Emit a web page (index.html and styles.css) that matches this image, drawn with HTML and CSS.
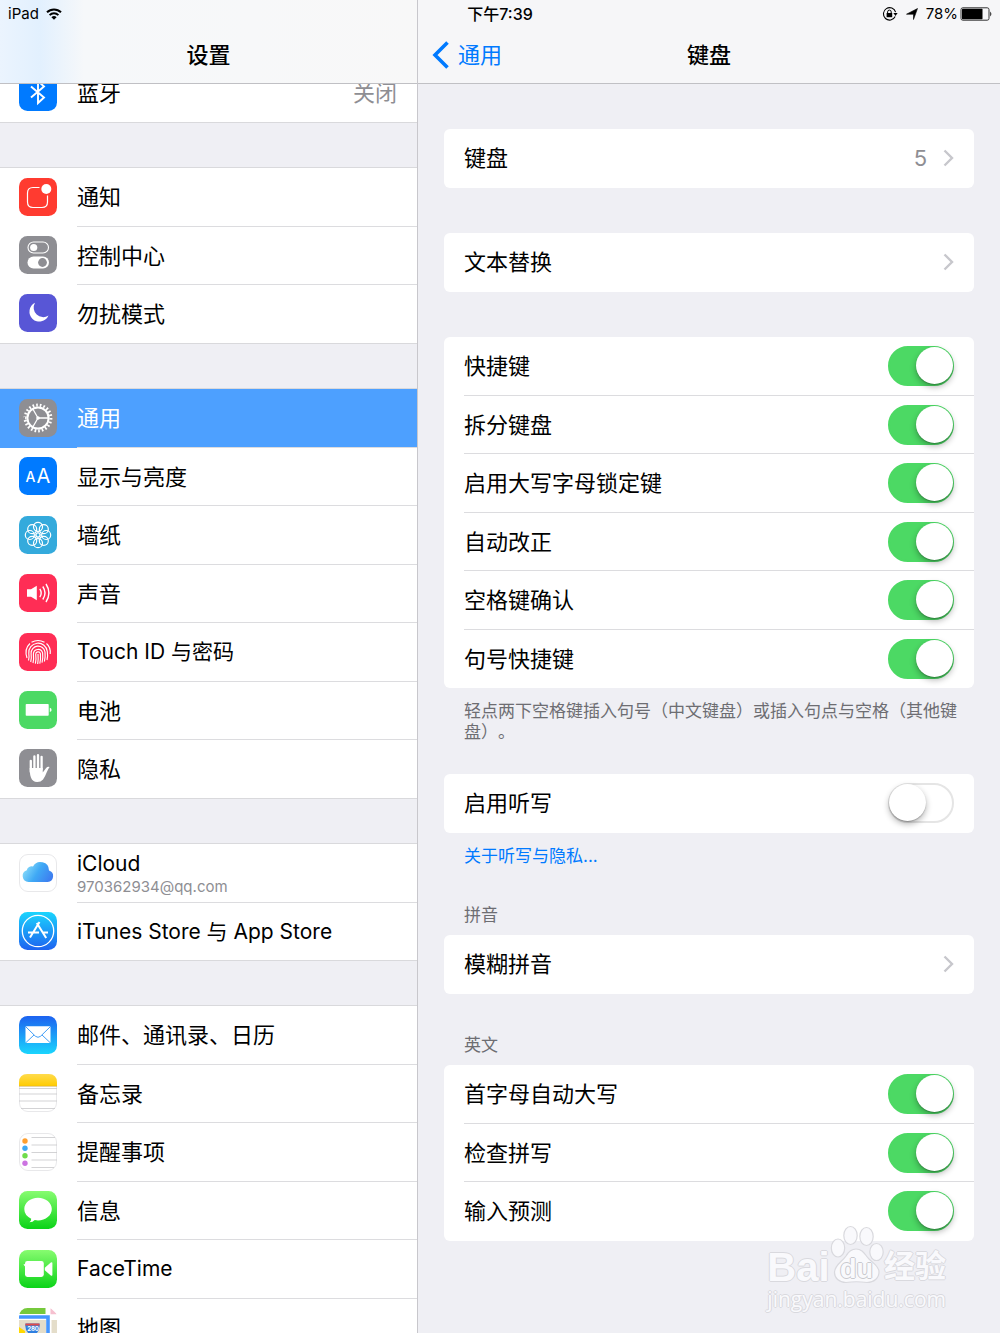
FILE: index.html
```html
<!DOCTYPE html>
<html lang="zh-CN">
<head>
    <meta charset="UTF-8">
    <meta name="viewport" content="width=device-width, initial-scale=1.0">
    <title>设置 - 键盘</title>
    <link rel="stylesheet" href="styles.css">
</head>
<body>
    <div class="status-bar">
        <div class="status-left">
            <span>iPad</span>
            <svg width="16" height="12" viewBox="0 0 16 12" fill="none" stroke="#000" stroke-width="2">
                <path d="M1 4.3a10 10 0 0 1 14 0"></path>
                <path d="M3.6 7.1a6.3 6.3 0 0 1 8.8 0"></path>
                <path d="M8 11.8L5.4 9.2a3.7 3.7 0 0 1 5.2 0z" fill="#000" stroke="none"></path>
            </svg>
        </div>
        <div class="status-time">下午7:39</div>
        <div class="status-right">
            <svg width="16" height="16" viewBox="0 0 16 16" fill="none" stroke="#000">
                <path d="M13.2 10.6A6.2 6.2 0 1 1 13.6 6.2" stroke-width="1.1"></path>
                <path d="M11.4 7h4.2l-2.1 3z" fill="#000" stroke="none"></path>
                <path d="M5.6 7.3v-1.4a1.8 1.8 0 0 1 3.6 0v1.4"></path>
                <rect x="4.6" y="7" width="5.6" height="4.2" fill="#000" stroke="none"></rect>
            </svg>
            <svg width="14" height="14" viewBox="0 0 14 14">
                <path d="M12.500 1.500L8.500 12.500V7.200H1.500z" fill="#000" stroke="#000" stroke-width="0.600"></path>
            </svg>
            <span>78%</span>
            <svg class="battery" width="32" height="14" viewBox="0 0 32 14">
                <rect x="1" y="0.8" width="28" height="12.4" rx="1.8" fill="none" stroke="#333"></rect>
                <rect x="2" y="1.8" width="20.5" height="10.4" rx="0.6"></rect>
                <path d="M30.3 4.6q2 2.4 0 4.8z"></path>
            </svg>
        </div>
    </div>

    <div class="split-view">
        <aside class="sidebar">
            <header class="navbar navbar-sidebar">
                <h1 class="navbar-title">设置</h1>
            </header>
            <nav class="sidebar-list">
                <ul class="menu menu-first">
                    <li><a class="menu-row" href="#bluetooth">
                        <svg class="icon" viewBox="0 0 38 38">
                            <rect width="38" height="38" rx="8.5" fill="#007aff"></rect>
                            <path d="M12 13.500l13 11-6 5.500V8l6 5.500-13 11" fill="none" stroke="#fff" stroke-width="1.900"></path>
                        </svg>
                        <span class="menu-body">蓝牙<span class="menu-value">关闭</span></span>
                    </a></li>
                </ul>
                <ul class="menu">
                    <li><a class="menu-row" href="#notifications">
                        <svg class="icon" viewBox="0 0 38 38">
                            <rect width="38" height="38" rx="8.5" fill="#ff3b30"></rect>
                            <path d="M20.500 9.500H14q-5.500 0-5.500 5.500v9q0 5.500 5.500 5.500h9q5.500 0 5.500-5.500v-6.500" fill="none" stroke="#fff" stroke-width="1.2"></path>
                            <circle cx="27.3" cy="11" r="5" fill="#fff"></circle>
                        </svg>
                        <span class="menu-body">通知</span>
                    </a></li>
                    <li><a class="menu-row" href="#control-center">
                        <svg class="icon" viewBox="0 0 38 38">
                            <rect width="38" height="38" rx="8.5" fill="#8e8e93"></rect>
                            <rect x="9" y="6" width="20.500" height="11" rx="5.500" fill="none" stroke="#fff" stroke-width="1.1"></rect>
                            <circle cx="14.7" cy="11.5" r="3.6" fill="#fff"></circle>
                            <rect x="8.5" y="20.5" width="21.5" height="12" rx="6" fill="#fff"></rect>
                            <circle cx="23.5" cy="26.5" r="4.4" fill="#8e8e93"></circle>
                        </svg>
                        <span class="menu-body">控制中心</span>
                    </a></li>
                    <li><a class="menu-row" href="#do-not-disturb">
                        <svg class="icon" viewBox="0 0 38 38">
                            <rect width="38" height="38" rx="8.5" fill="#5856d6"></rect>
                            <path d="M16 8.800A9.900 9.900 0 1 0 29.500 21.500A9.500 9.500 0 0 1 16 8.800z" fill="#fff"></path>
                        </svg>
                        <span class="menu-body">勿扰模式</span>
                    </a></li>
                </ul>
                <ul class="menu">
                    <li><a class="menu-row selected" href="#general" aria-current="page">
                        <svg class="icon" viewBox="0 0 38 38">
                            <rect width="38" height="38" rx="8.5" fill="#8e8e93"></rect>
                            <g fill="none" stroke="#fff">
                                <circle cx="19" cy="19" r="10.600" stroke-width="2"></circle>
                                <circle cx="19" cy="19" r="12.900" stroke-width="3" pathLength="44" stroke-dasharray="0.900 1.100"></circle>
                                <path d="M19 19h10.500M19 19l-5.300-9.200M19 19l-5.300 9.200" stroke-width="1.3"></path>
                            </g>
                            <circle cx="19" cy="19" r="1.800" fill="#fff"></circle>
                        </svg>
                        <span class="menu-body">通用</span>
                    </a></li>
                    <li><a class="menu-row" href="#display">
                        <svg class="icon" viewBox="0 0 38 38">
                            <rect width="38" height="38" rx="8.5" fill="#007aff"></rect>
                            <text class="icon-letter" x="6.500" y="25" font-size="14" font-weight="500">A</text>
                            <text class="icon-letter" x="17.500" y="26" font-size="20">A</text>
                        </svg>
                        <span class="menu-body">显示与亮度</span>
                    </a></li>
                    <li><a class="menu-row" href="#wallpaper">
                        <svg class="icon" viewBox="0 0 38 38">
                            <rect width="38" height="38" rx="8.5" fill="#34aadc"></rect>
                            <g fill="none" stroke="#fff" stroke-width="1.200">
                                <circle cx="19" cy="10.800" r="4.500"></circle>
                                <circle cx="24.800" cy="13.200" r="4.500"></circle>
                                <circle cx="27.200" cy="19" r="4.500"></circle>
                                <circle cx="24.800" cy="24.800" r="4.500"></circle>
                                <circle cx="19" cy="27.200" r="4.500"></circle>
                                <circle cx="13.200" cy="24.800" r="4.500"></circle>
                                <circle cx="10.800" cy="19" r="4.500"></circle>
                                <circle cx="13.200" cy="13.200" r="4.500"></circle>
                                <circle cx="19" cy="19" r="2"></circle>
                                <path d="M19 15v2M19 21v2M15 19h2M21 19h2M16 16l1.600 1.600M20.400 20.400l1.600 1.600M22 16l-1.600 1.600M17.600 20.400l-1.600 1.600"></path>
                            </g>
                        </svg>
                        <span class="menu-body">墙纸</span>
                    </a></li>
                    <li><a class="menu-row" href="#sounds">
                        <svg class="icon" viewBox="0 0 38 38">
                            <rect width="38" height="38" rx="8.5" fill="#ff2d55"></rect>
                            <path d="M8 15.300h4l5.800-3.500v14.400l-5.800-3.500H8z" fill="#fff"></path>
                            <g fill="none" stroke="#fff" stroke-width="1.4">
                                <path d="M20.800 14.800q2.800 4.200 0 8.400"></path>
                                <path d="M23.800 12.500q4.400 6.500 0 13"></path>
                                <path d="M27 10q5.800 9 0 18"></path>
                            </g>
                        </svg>
                        <span class="menu-body">声音</span>
                    </a></li>
                    <li><a class="menu-row latin" href="#touch-id">
                        <svg class="icon" viewBox="0 0 38 38">
                            <rect width="38" height="38" rx="8.5" fill="#ff2d55"></rect>
                            <g fill="none" stroke="#fff" stroke-width="1.150">
                                <path d="M12.500 9.300q6.500-3.600 13 0"></path>
                                <path d="M8 25q-3-9 3-14.500M27.500 10.500q4.500 4 3.700 10.500"></path>
                                <path d="M9.500 27.500q1-3 .3-7a9.300 9.300 0 0 1 18.500-2q.7 4.500-.3 8.500"></path>
                                <path d="M11.700 29q1-4 .4-8.500a7 7 0 0 1 13.900-1.500q.5 5-.6 9.500"></path>
                                <path d="M14 30q1-4 .4-9a4.700 4.700 0 0 1 9.200-1.200q.6 5-.6 9.800"></path>
                                <path d="M16.400 30.600q1-4.500.3-9.400a2.400 2.400 0 0 1 4.700-.6q.5 5-.6 10"></path>
                                <path d="M19 21q.5 5-.3 10"></path>
                            </g>
                        </svg>
                        <span class="menu-body">Touch ID 与密码</span>
                    </a></li>
                    <li><a class="menu-row" href="#battery">
                        <svg class="icon" viewBox="0 0 38 38">
                            <rect width="38" height="38" rx="8.5" fill="#4cd964"></rect>
                            <rect x="6.700" y="13" width="23" height="11.700" rx="0.800" fill="#fff"></rect>
                            <path d="M30.800 16.800q1.800.6 1.800 2.100t-1.800 2.100z" fill="#fff"></path>
                        </svg>
                        <span class="menu-body">电池</span>
                    </a></li>
                    <li><a class="menu-row" href="#privacy">
                        <svg class="icon" viewBox="0 0 38 38">
                            <rect width="38" height="38" rx="8.5" fill="#8e8e93"></rect>
                            <g fill="none" stroke="#fff" stroke-width="2.300" stroke-linecap="round">
                                <path d="M11.800 23V11.800M15.400 20V7.500M19 20V6.200M22.600 20V7.800"></path>
                            </g>
                            <path d="M10.650 19h13.100v4.500l3.200-4.300q1.400-1.800 3.700-1.200-1.500 1.800-2.800 5-1.800 4.800-3.800 7.500-2.300 2.600-6 2.500-4.500-.2-6.100-4.500-1-2.800-1.100-6z" fill="#fff"></path>
                        </svg>
                        <span class="menu-body">隐私</span>
                    </a></li>
                </ul>
                <ul class="menu">
                    <li><a class="menu-row latin" href="#icloud">
                        <svg class="icon" viewBox="0 0 38 38">
                            <linearGradient id="cloud" x1="0" y1="0.3" x2="1" y2="0.7">
                                <stop offset="0" stop-color="#8fe0fa"></stop>
                                <stop offset="0.5" stop-color="#3fa9f5"></stop>
                                <stop offset="1" stop-color="#3d7cf0"></stop>
                            </linearGradient>
                            <rect x="0.5" y="0.5" width="37" height="37" rx="8.5" fill="#fff" stroke="#e8e8ea"></rect>
                            <path d="M9.500 28a6 6 0 0 1-1.700-11.700 5 5 0 0 1 6.200-3.800 8.500 8.500 0 0 1 16 4A5.900 5.900 0 0 1 28.700 28z" fill="url(#cloud)"></path>
                        </svg>
                        <span class="menu-body menu-account">
                            <span class="account-name">iCloud</span>
                            <span class="account-mail">970362934@qq.com</span>
                        </span>
                    </a></li>
                    <li><a class="menu-row latin" href="#store">
                        <svg class="icon" viewBox="0 0 38 38">
                            <linearGradient id="store" x1="0" y1="0" x2="0" y2="1">
                                <stop offset="0" stop-color="#1ad5fd"></stop>
                                <stop offset="1" stop-color="#1d62f0"></stop>
                            </linearGradient>
                            <rect width="38" height="38" rx="8.5" fill="url(#store)"></rect>
                            <g fill="none" stroke="#fff">
                                <circle cx="19" cy="19" r="15.700" stroke-width="1.300"></circle>
                                <path d="M20.500 10L11 25.500M17.800 11l9.400 15M9 20.500h11M23.800 20.500H29" stroke-width="2"></path>
                            </g>
                        </svg>
                        <span class="menu-body">iTunes Store 与 App Store</span>
                    </a></li>
                </ul>
                <ul class="menu">
                    <li><a class="menu-row" href="#mail">
                        <svg class="icon" viewBox="0 0 38 38">
                            <linearGradient id="mail" x1="0" y1="0" x2="0" y2="1">
                                <stop offset="0" stop-color="#1d62f0"></stop>
                                <stop offset="1" stop-color="#1ad5fd"></stop>
                            </linearGradient>
                            <rect width="38" height="38" rx="8.5" fill="url(#mail)"></rect>
                            <rect x="6.500" y="10.300" width="25" height="16.700" rx="1.200" fill="#fff"></rect>
                            <path d="M7 11l9.500 9.300q2.500 2 5 0L31 11M7 26.500l8-7.500M31 26.500L23 19" fill="none" stroke="#2e93f5" stroke-width="0.900"></path>
                        </svg>
                        <span class="menu-body">邮件、通讯录、日历</span>
                    </a></li>
                    <li><a class="menu-row" href="#notes">
                        <svg class="icon" viewBox="0 0 38 38">
                            <linearGradient id="notes" x1="0" y1="0" x2="0" y2="1">
                                <stop offset="0" stop-color="#ffdb4c"></stop>
                                <stop offset="1" stop-color="#ffcc02"></stop>
                            </linearGradient>
                            <rect x="0.500" y="0.500" width="37" height="37" rx="8.5" fill="#fff" stroke="#e8e8ea"></rect>
                            <path d="M0 12V8.500Q0 0 8.500 0h21Q38 0 38 8.500V12z" fill="url(#notes)"></path>
                            <path d="M0 12.300h38" stroke="#c9a33a" stroke-width="0.600"></path>
                            <path d="M0 14.500h38M0 20h38M0 27h38M2 34.500h34" stroke="#c8c8ca" stroke-width="0.800"></path>
                        </svg>
                        <span class="menu-body">备忘录</span>
                    </a></li>
                    <li><a class="menu-row" href="#reminders">
                        <svg class="icon" viewBox="0 0 38 38">
                            <rect x="0.500" y="0.500" width="37" height="37" rx="8.5" fill="#fff" stroke="#e8e8ea"></rect>
                            <circle cx="6" cy="8" r="2.700" fill="#ff9f2e"></circle>
                            <circle cx="6" cy="15.300" r="2.700" fill="#3fa9f5"></circle>
                            <circle cx="6" cy="22.800" r="2.700" fill="#6fdc4b"></circle>
                            <circle cx="6" cy="30.200" r="2.700" fill="#cc73e1"></circle>
                            <path d="M12.500 4.500H36M12.500 12H38M12.500 19.500H38M12.500 27H38M12.500 34.500H35" stroke="#c8c8ca" stroke-width="0.800"></path>
                        </svg>
                        <span class="menu-body">提醒事项</span>
                    </a></li>
                    <li><a class="menu-row" href="#messages">
                        <svg class="icon" viewBox="0 0 38 38">
                            <linearGradient id="green" x1="0" y1="0" x2="0" y2="1">
                                <stop offset="0" stop-color="#87fc70"></stop>
                                <stop offset="1" stop-color="#0bd318"></stop>
                            </linearGradient>
                            <rect width="38" height="38" rx="8.5" fill="url(#green)"></rect>
                            <path d="M19 6.800c7.700 0 13.800 5 13.800 11.300S26.700 29.500 19 29.500q-1.700 0-3.200-.4-2 2.200-5.300 2.200 1.800-1.500 1.700-3.600Q5.300 24.500 5.300 18.100C5.300 11.800 11.300 6.800 19 6.800z" fill="#fff"></path>
                        </svg>
                        <span class="menu-body">信息</span>
                    </a></li>
                    <li><a class="menu-row latin" href="#facetime">
                        <svg class="icon" viewBox="0 0 38 38">
                            <rect width="38" height="38" rx="8.5" fill="url(#green)"></rect>
                            <rect x="6" y="11" width="18.800" height="16" rx="2.400" fill="#fff"></rect>
                            <path d="M4.400 14.500l2.600-.8v4zM25.800 17.800l6-5.200q1.600-1 1.600.6v11.600q0 1.600-1.600.6l-6-5.200z" fill="#fff"></path>
                        </svg>
                        <span class="menu-body">FaceTime</span>
                    </a></li>
                    <li><a class="menu-row" href="#maps">
                        <svg class="icon" viewBox="0 0 38 38">
                            <clipPath id="maps"><rect width="38" height="38" rx="8.5"></rect></clipPath>
                            <g clip-path="url(#maps)">
                                <rect width="38" height="38" fill="#fff"></rect>
                                <path d="M0 0h26.500v6H0z" fill="#76c93c"></path>
                                <path d="M31.500 0l6.500 6.200h-6.500z" fill="#f6c0cf"></path>
                                <path d="M0 12h27v26H0zM32.500 12H38v26h-5.500z" fill="#e4ddca"></path>
                                <path d="M0 19l6 4v15H0z" fill="#ffd800"></path>
                                <path d="M0 9h29v29" fill="none" stroke="#4596ff" stroke-width="3.600"></path>
                            </g>
                            <path d="M6.500 15.500h14q1.500 8-6.900 13Q5 23.500 6.500 15.500z" fill="#2f7fe0"></path>
                            <path d="M6.500 15.500h14v2H6.300z" fill="#e04a4a"></path>
                            <text class="icon-letter shield" x="8.200" y="23.300" font-size="6">280</text>
                        </svg>
                        <span class="menu-body">地图</span>
                    </a></li>
                </ul>
            </nav>
        </aside>

        <main class="detail">
            <header class="navbar">
                <a class="back" href="#general">
                    <svg width="17" height="28" viewBox="0 0 17 28" fill="none" stroke="#007aff" stroke-width="3.6">
                        <path d="M15.500 1.500L3 14l12.500 12.500"></path>
                    </svg>
                    通用
                </a>
                <h2 class="navbar-title">键盘</h2>
            </header>
            <div class="detail-body">
                <div class="card">
                    <a class="row" href="#keyboards">
                        <span class="row-label">键盘</span>
                        <span class="row-value">5</span>
                        <svg class="chevron" viewBox="0 0 11 18"><path d="M1.500 1.500L9 9l-7.500 7.500"></path></svg>
                    </a>
                </div>

                <div class="card">
                    <a class="row" href="#text-replacement">
                        <span class="row-label">文本替换</span>
                        <svg class="chevron" viewBox="0 0 11 18"><path d="M1.500 1.500L9 9l-7.500 7.500"></path></svg>
                    </a>
                </div>

                <div class="card">
                    <label class="row"><span class="row-label">快捷键</span><input class="switch" type="checkbox" checked></label>
                    <label class="row"><span class="row-label">拆分键盘</span><input class="switch" type="checkbox" checked></label>
                    <label class="row"><span class="row-label">启用大写字母锁定键</span><input class="switch" type="checkbox" checked></label>
                    <label class="row"><span class="row-label">自动改正</span><input class="switch" type="checkbox" checked></label>
                    <label class="row"><span class="row-label">空格键确认</span><input class="switch" type="checkbox" checked></label>
                    <label class="row"><span class="row-label">句号快捷键</span><input class="switch" type="checkbox" checked></label>
                </div>
                <p class="note">轻点两下空格键插入句号（中文键盘）或插入句点与空格（其他键盘）。</p>

                <div class="card">
                    <label class="row"><span class="row-label">启用听写</span><input class="switch" type="checkbox"></label>
                </div>
                <p class="note"><a href="#dictation">关于听写与隐私...</a></p>

                <h3 class="card-title">拼音</h3>
                <div class="card">
                    <a class="row" href="#fuzzy-pinyin">
                        <span class="row-label">模糊拼音</span>
                        <svg class="chevron" viewBox="0 0 11 18"><path d="M1.500 1.500L9 9l-7.500 7.500"></path></svg>
                    </a>
                </div>

                <h3 class="card-title">英文</h3>
                <div class="card">
                    <label class="row"><span class="row-label">首字母自动大写</span><input class="switch" type="checkbox" checked></label>
                    <label class="row"><span class="row-label">检查拼写</span><input class="switch" type="checkbox" checked></label>
                    <label class="row"><span class="row-label">输入预测</span><input class="switch" type="checkbox" checked></label>
                </div>
            </div>
        </main>
    </div>

    <div class="watermark">
        <div class="watermark-logo">
            <span class="watermark-bai">Bai</span>
            <span class="paw">
                <svg width="54" height="60" viewBox="0 0 54 60" fill="#f9f9fc" stroke="#d9d9de" stroke-width="1.200">
                    <ellipse cx="8" cy="23" rx="6.700" ry="9"></ellipse>
                    <ellipse cx="20.500" cy="10.500" rx="6.700" ry="9"></ellipse>
                    <ellipse cx="36.500" cy="11.500" rx="6.700" ry="9"></ellipse>
                    <ellipse cx="46.500" cy="27" rx="6.700" ry="8.500"></ellipse>
                    <path d="M26 24c7 0 9 6 13 10s10 7 10 13-5 10.500-12 10.500q-11-1.500-21 0C9 57.500 4.500 53 4.500 47.500 4.500 40 12 37 16 31q4-7 10-7z"></path>
                </svg>
                <span class="watermark-du">du</span>
            </span>
            <span class="watermark-cn">经验</span>
        </div>
        <div class="watermark-url">jingyan.baidu.com</div>
    </div>
</body>
</html>
```
FILE: styles.css
```css
* {
    margin: 0;
    padding: 0;
    box-sizing: border-box;
}

body {
    position: relative;
    height: 100vh;
    overflow: hidden;
    background-color: #efeff4;
    color: #000;
    font-family: Inter, "Noto Sans CJK SC", sans-serif;
    font-size: 22px;
    line-height: 30px;
}

a {
    color: inherit;
    text-decoration: none;
}

ul {
    list-style: none;
}

svg {
    display: block;
    flex: none;
}

/* status bar */

.status-bar {
    position: absolute;
    top: 0;
    left: 0;
    right: 0;
    z-index: 2;
    height: 27px;
    padding: 0 8px;
    display: grid;
    grid-template-columns: 1fr auto 1fr;
    align-items: center;
    font-size: 15px;
    line-height: 20px;
}

.status-left,
.status-right {
    display: flex;
    align-items: center;
    gap: 7px;
}

.status-right {
    justify-content: flex-end;
}

.status-time {
    font-size: 16px;
    font-weight: 500;
}

.battery {
    margin-left: -5px;
}

/* layout */

.split-view {
    display: flex;
    height: 100%;
}

.sidebar {
    width: 41.8%;
    display: flex;
    flex-direction: column;
    border-right: 1px solid #c8c7cc;
}

.detail {
    flex: 1;
    display: flex;
    flex-direction: column;
}

.navbar {
    flex: none;
    height: 84px;
    padding: 27px 14px 0;
    display: grid;
    grid-template-columns: 1fr auto 1fr;
    align-items: center;
    background-color: #f6f6f8;
    border-bottom: 1px solid #c0c0c4;
}

.navbar-sidebar {
    background: linear-gradient(to right, #ebf4fe, #e2f0fe 40px, #f6f8fa 84px, #f8f8f8);
}

.navbar-title {
    grid-column: 2;
    font-size: 22px;
    font-weight: 500;
}

.back {
    display: flex;
    align-items: center;
    gap: 9px;
    color: #007aff;
}

/* sidebar */

.sidebar-list {
    flex: 1;
    min-height: 0;
    overflow: hidden;
}

.menu {
    margin-bottom: 45px;
    background-color: #fff;
    box-shadow: 0 -1px 0 #d9d9dc;
}

/* the list is scrolled a little under the title bar */
.menu-first {
    margin-top: -20px;
}

.menu-row {
    height: 59px;
    padding-left: 19px;
    display: flex;
    align-items: center;
    gap: 20px;
}

.menu-row.latin {
    font-size: 21px;
}

.menu li:nth-child(even) .menu-row,
.row:nth-child(even) {
    height: 58px;
}

.menu li:last-child .menu-row {
    border-bottom: 1px solid #d9d9dc;
}

.menu li:last-child .menu-body {
    border-bottom: none;
}

.menu-row.selected {
    background-color: #4da0ff;
    color: #fff;
}

.icon {
    width: 38px;
    height: 38px;
    margin-bottom: 2px;
}

.icon-letter {
    fill: #fff;
    font-family: Inter, sans-serif;
}

.shield {
    font-weight: 700;
}

.menu-body {
    flex: 1;
    align-self: stretch;
    padding-right: 20px;
    display: flex;
    align-items: center;
    justify-content: space-between;
    border-bottom: 1px solid #dcdcdf;
}

.menu-value,
.row-value {
    color: #8e8e93;
}

.menu-account {
    flex-direction: column;
    align-items: flex-start;
    justify-content: center;
}

.account-name {
    padding-top: 2px;
    line-height: 26px;
}

.account-mail {
    color: #8e8e93;
    font-size: 15px;
    line-height: 20px;
}

/* detail */

.detail-body {
    padding: 0 26px;
}

.card {
    margin: 45px 0;
    background-color: #fff;
    border-radius: 6px;
}

.row {
    height: 59px;
    margin-left: 20px;
    padding-right: 20px;
    display: flex;
    align-items: center;
    gap: 16px;
    border-bottom: 1px solid #dcdcdf;
}

.row:last-child {
    border-bottom-color: transparent;
}

.row-label {
    flex: 1;
}

.chevron {
    width: 11px;
    height: 18px;
    fill: none;
    stroke: #c7c7cc;
    stroke-width: 2.4;
}

.note {
    margin: -32px 16px 31px 20px;
    color: #6d6d72;
    font-size: 17px;
    line-height: 21px;
    text-spacing-trim: space-all;
}

.note a {
    color: #007aff;
}

.card-title {
    margin: 38px 20px 9px;
    color: #6d6d72;
    font-size: 17px;
    font-weight: 400;
    line-height: 21px;
}

.note + .card {
    margin-top: 31px;
}

.card-title + .card {
    margin-top: 9px;
}

.card:has(+ .card-title) {
    margin-bottom: 41px;
}

.switch {
    position: relative;
    width: 66px;
    height: 40px;
    appearance: none;
    background-color: #fff;
    border: 2px solid #e5e5e5;
    border-radius: 20px;
    cursor: pointer;
}

.switch::before {
    content: "";
    position: absolute;
    top: -1px;
    left: -1px;
    width: 37px;
    height: 37px;
    background-color: #fff;
    border-radius: 50%;
    box-shadow: 0 3px 6px rgba(0, 0, 0, 0.3), 0 1px 1px rgba(0, 0, 0, 0.2);
}

.switch:checked {
    background-color: #4cd964;
    border-color: #4cd964;
}

.switch:checked::before {
    left: 26px;
}

/* watermark */

.watermark {
    position: absolute;
    right: 54px;
    bottom: 20px;
    color: #f9f9fc;
    text-shadow: 1px 0 #d9d9de, -1px 0 #d9d9de, 0 1px #d9d9de, 0 -1px #d9d9de;
    pointer-events: none;
}

.watermark-logo {
    display: flex;
    align-items: flex-end;
    font-family: "Liberation Sans", "Noto Sans CJK SC", sans-serif;
    font-weight: 700;
    line-height: 36px;
}

.watermark-bai {
    font-size: 40px;
}

.paw {
    position: relative;
}

.watermark-du {
    position: absolute;
    left: 0;
    right: 0;
    bottom: 0;
    font-size: 27px;
    line-height: 32px;
    text-align: center;
    text-shadow: 1px 0 #c9c9ce, -1px 0 #c9c9ce, 0 1px #c9c9ce, 0 -1px #c9c9ce;
}

.watermark-cn {
    margin-left: auto;
    font-size: 31px;
}

.watermark-url {
    font-family: "Open Sans", sans-serif;
    font-size: 21px;
    line-height: 28px;
}
```
